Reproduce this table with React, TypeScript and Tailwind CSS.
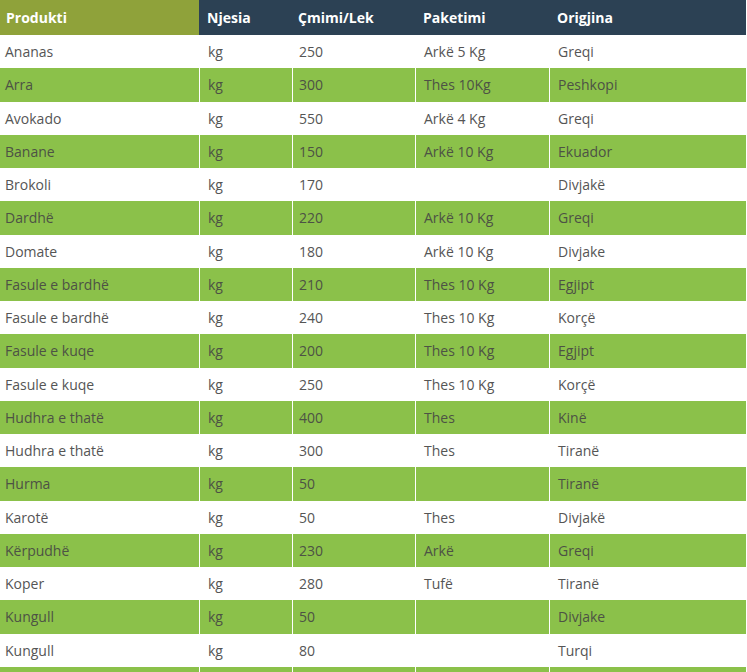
import React from "react";

const rows: [string, string, string, string, string][] = [
  ["Ananas", "kg", "250", "Arkë 5 Kg", "Greqi"],
  ["Arra", "kg", "300", "Thes 10Kg", "Peshkopi"],
  ["Avokado", "kg", "550", "Arkë 4 Kg", "Greqi"],
  ["Banane", "kg", "150", "Arkë 10 Kg", "Ekuador"],
  ["Brokoli", "kg", "170", "", "Divjakë"],
  ["Dardhë", "kg", "220", "Arkë 10 Kg", "Greqi"],
  ["Domate", "kg", "180", "Arkë 10 Kg", "Divjake"],
  ["Fasule e bardhë", "kg", "210", "Thes 10 Kg", "Egjipt"],
  ["Fasule e bardhë", "kg", "240", "Thes 10 Kg", "Korçë"],
  ["Fasule e kuqe", "kg", "200", "Thes 10 Kg", "Egjipt"],
  ["Fasule e kuqe", "kg", "250", "Thes 10 Kg", "Korçë"],
  ["Hudhra e thatë", "kg", "400", "Thes", "Kinë"],
  ["Hudhra e thatë", "kg", "300", "Thes", "Tiranë"],
  ["Hurma", "kg", "50", "", "Tiranë"],
  ["Karotë", "kg", "50", "Thes", "Divjakë"],
  ["Kërpudhë", "kg", "230", "Arkë", "Greqi"],
  ["Koper", "kg", "280", "Tufë", "Tiranë"],
  ["Kungull", "kg", "50", "", "Divjake"],
  ["Kungull", "kg", "80", "", "Turqi"],
  ["", "", "", "", ""],
];

const widths = ["w-[199px] pl-[5px]", "w-[93px] pl-[8px]", "w-[123px] pl-[6px]", "w-[134px] pl-[8px]", "w-[197px] pl-[8px]"];

export default function App() {
  return (
    <div
      className="w-[747px] h-[672px] overflow-hidden bg-white text-[14px] text-[#555]"
      style={{ fontFamily: '"Open Sans", "Liberation Sans", sans-serif' }}
    >
      <div className="flex h-[35px] w-[746px] font-bold text-white">
        <div className="w-[199px] pl-[6px] bg-[#8fa23a] flex items-center">Produkti</div>
        <div className="flex-1 bg-[#2c4154] flex items-center">
          <div className="w-[93px] pl-[8px]">Njesia</div>
          <div className="w-[123px] pl-[6px]">Çmimi/Lek</div>
          <div className="w-[134px] pl-[8px]">Paketimi</div>
          <div className="w-[197px] pl-[8px]">Origjina</div>
        </div>
      </div>
      {rows.map((r, i) => {
        const green = i % 2 === 1;
        return (
          <div key={i} className="flex h-[33.25px] w-[746px]">
            {r.map((c, j) => (
              <div
                key={j}
                className={`${widths[j]} flex items-center ${green ? "bg-[#8bc14a] text-[#4d5245]" : "bg-white"} ${j > 0 ? "border-l border-white" : ""}`}
              >
                {c}
              </div>
            ))}
          </div>
        );
      })}
    </div>
  );
}
